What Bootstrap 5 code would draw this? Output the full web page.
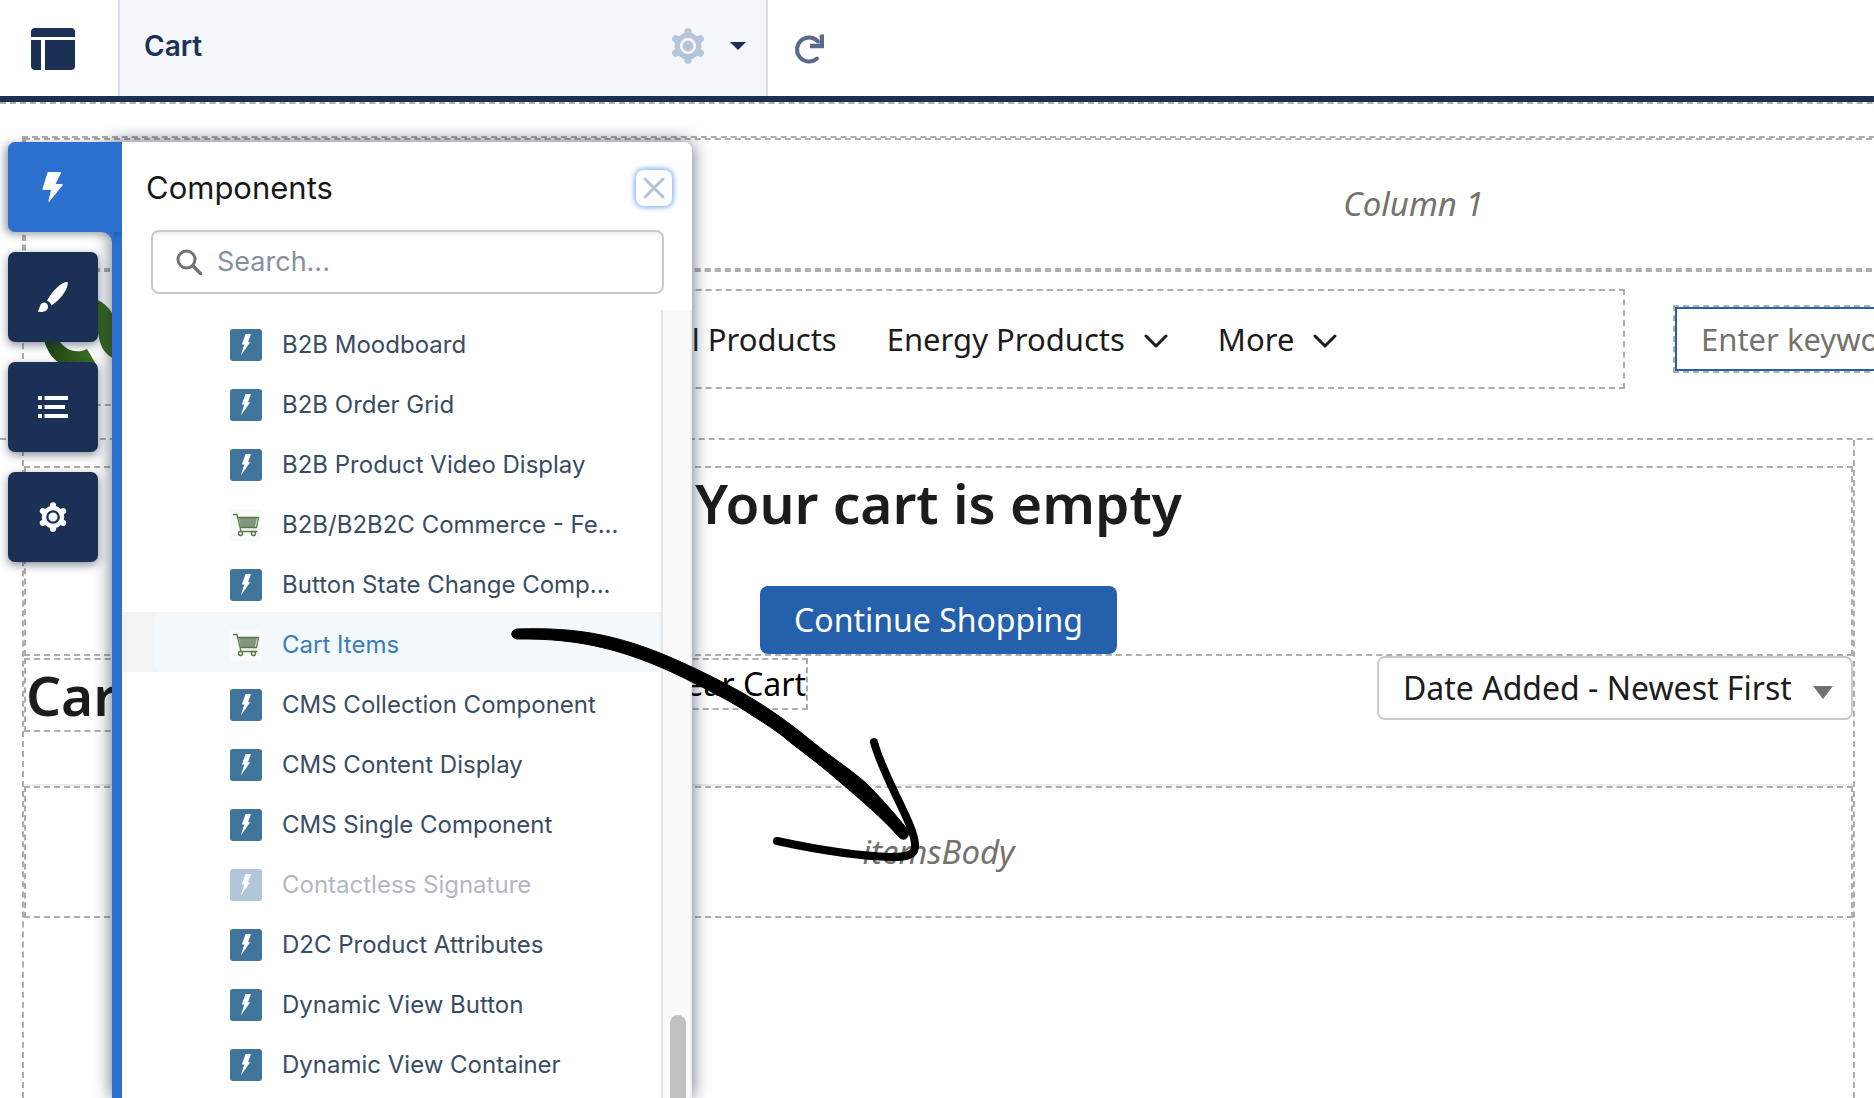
<!DOCTYPE html>
<html lang="en">
<head>
<meta charset="utf-8">
<meta name="viewport" content="width=device-width, initial-scale=1">
<title>Experience Builder - Cart</title>
<link href="https://cdn.jsdelivr.net/npm/bootstrap@5.3.0/dist/css/bootstrap.min.css" rel="stylesheet">
<style>
  :root { --navy: #1b3055; --blue: #2b70cd; --dash: 2px dashed #b0adab; --gutter: 22px; }
  body { font-family: "Inter", "Liberation Sans", sans-serif; color: #1c1c1c; background: #fff; }
  svg { display: block; flex: none; }

  /* top bar */
  .topbar { height: 102px; border-bottom: 6px solid var(--navy); }
  .brand-cell { width: 120px; border-right: 2px solid #dadfea; padding-left: 31px; padding-top: 2px; }
  .page-cell { width: 648px; background: #f4f6fb; border-right: 2px solid #d8dfe8; padding: 0 20px 4px 24px; }
  .page-name { font-size: 28px; font-weight: 600; color: var(--navy); }
  .plain-btn { border: 0; background: none; padding: 0; }

  /* canvas */
  .canvas { font-family: "Noto Sans", "Open Sans", sans-serif; font-size: 32px; line-height: 48px; overflow: hidden; }
  .site-head { width: 150%; border-top: var(--dash); border-bottom: var(--dash); padding: 32px 8px 0 var(--gutter); }
  .head-grid { border-top: var(--dash); border-left: var(--dash); }
  .zone { height: 132px; border: var(--dash); color: #75726d; font-style: italic; font-size: 33px; }
  .head-row { border-top: var(--dash); padding-bottom: 32px; }
  .logo-zone { width: 400px; height: 134px; border-bottom: var(--dash); padding: 24px 0 0 14px; }
  .nav-zone { width: 1100px; height: 100px; border: var(--dash); margin-left: 101px; padding-left: 137px; gap: 50px; font-size: 31px; }
  .nav-zone a { color: #1c1c1c; text-decoration: none; gap: 19px; white-space: nowrap; }
  .search-zone { width: 700px; margin-left: 48px; border: var(--dash); }
  .search-zone input { height: 64px; border: 2px solid #2560ac; border-radius: 0; font-size: 31px; padding: 0 24px; }
  .search-zone input::placeholder { color: #75726d; opacity: 1; }
  .site-body { margin: 0 19px 0 var(--gutter); border: var(--dash); border-top: 0; border-bottom: 0; padding-top: 26px; }
  .empty-zone { border: var(--dash); gap: 48px; }
  .big-title { font-size: 55px; line-height: 70px; font-weight: 600; margin: 0; }
  .shop-btn { height: 68px; padding: 0 34px; border: 0; border-radius: 8px; background: #2560ac; color: #fff; font-size: 32px; line-height: 48px; }
  .sum-row { height: 128px; }
  .cart-zone { width: 500px; height: 74px; border: var(--dash); margin-top: 2px; }
  .clear-zone { width: 284px; height: 52px; border: var(--dash); margin-top: 2px; }
  .clear-zone button { width: 100%; text-align: right; line-height: 48px; }
  .sort-box { width: 476px; }
  .sort-box select { height: 64px; border: 2px solid #c9c9c9; border-radius: 8px; font-size: 32px; line-height: 48px; padding: 0 60px 0 24px; background-image: none; color: #1c1c1c; }
  .sort-box svg { position: absolute; right: 20px; top: 30px; pointer-events: none; }
  .items-wrap { border-top: 2px solid #ecebea; }

  /* floating builder panel */
  .builder { position: absolute; left: 8px; top: 142px; bottom: 0; z-index: 5; }
  .tabs-col { width: 104px; gap: 20px; position: relative; z-index: 2; }
  .tab-btn { width: 90px; height: 90px; border: 0; border-radius: 7px; background: var(--navy); box-shadow: 0 3px 10px rgba(15,30,60,.5); display: flex; align-items: center; justify-content: center; padding: 0; }
  .tab-btn.current { width: 114px; background: var(--blue); padding-right: 24px; border-radius: 7px 0 0 7px; box-shadow: -3px 2px 9px rgba(15,30,60,.45); clip-path: inset(-20px 0 -20px -20px); }
  .joint { position: absolute; left: 94px; top: 90px; }
  .drawer-box { width: 580px; border-left: 10px solid var(--blue); border-radius: 0 8px 0 0; background: #fff; box-shadow: 0 0 18px rgba(10,30,55,.65); }
  .drawer-head { padding: 28px 20px 24px 24px; }
  .drawer-head h2 { font-size: 31px; line-height: 36px; font-weight: 400; margin: 0; color: #181818; }
  .close-btn { width: 36px; height: 36px; border: 0; border-radius: 8px; background: #fff; box-shadow: 0 0 5px 2px #8db8ee; padding: 7px; }
  .find-box { margin: 0 28px 0 29px; height: 64px; border: 2px solid #c9c9c9; border-radius: 8px; padding-left: 23px; gap: 15px; box-shadow: inset 0 3px 3px rgba(0,0,0,.06); }
  .find-box input { border: 0; outline: 0; background: none; font-size: 27px; flex: 1; min-width: 0; padding: 0; }
  .find-box input::placeholder { color: #8490a0; opacity: 1; }
  .list-area { margin-top: 16px; min-height: 0; }
  .comp-list { padding: 2px 0 0; margin: 0; list-style: none; overflow: hidden; }
  .comp-list li { height: 60px; padding-left: 32px; }
  .comp-list a { height: 60px; padding: 6px 0 0 76px; gap: 20px; color: #384c62; font-size: 24px; text-decoration: none; white-space: nowrap; display: flex; align-items: center; }
  .comp-list .picked { background: #f3f3f3; }
  .comp-list .picked a { background: #f2f8fc; color: #3a7db5; border-radius: 8px; }
  .comp-list .muted-item a { color: #b0b8c2; }
  .comp-list .muted-item svg { --bolt-fill: #b1c6d8; }
  .track { width: 31px; background: #fafafa; border-left: 2px solid #e7e7e7; border-right: 2px solid #efefef; padding: 705px 4px 0 7px; }
  .thumb { background: #c1c1c1; border-radius: 8px 8px 0 0; height: 100%; }
  .arrow-note { position: absolute; left: 500px; top: 610px; z-index: 9; pointer-events: none; }
</style>
</head>
<body>
<svg width="0" height="0" class="position-absolute" aria-hidden="true">
  <defs>
    <symbol id="bolt" viewBox="0 0 32 32"><rect width="32" height="32" rx="3" fill="var(--bolt-fill, #41749b)"/><path d="M15.600 5H21l-3 8.200h2.200L10.800 26.600l3.500-11H11.800z" fill="#fff"/></symbol>
    <symbol id="cart" viewBox="0 0 32 32"><rect width="32" height="32" fill="#fafafa"/><path d="M9 9h18l-2 9H10.500z" fill="#84957f"/><path d="M3 5.500h4l4 17h16.500M7.700 8.500H28.500L26.500 18.500H10.500" fill="none" stroke="#587a47" stroke-width="1.300"/><circle cx="10.500" cy="24.500" r="2" fill="#fff" stroke="#587a47" stroke-width="1.500"/><circle cx="23.500" cy="24.500" r="2" fill="#fff" stroke="#587a47" stroke-width="1.500"/></symbol>
    <symbol id="gear" viewBox="0 0 36 36"><circle cx="18" cy="18" r="13"/><path d="M18 4v28M5.900 11l24.200 14M30.100 11L5.900 25" stroke-width="7.500" stroke-linecap="round"/><circle cx="18" cy="18" r="6.800" stroke="var(--hole)" stroke-width="2.800"/></symbol>
  </defs>
</svg>

<div class="position-relative d-flex flex-column vh-100 overflow-hidden">
  <header class="topbar d-flex flex-shrink-0">
    <div class="brand-cell d-flex align-items-center">
      <svg width="44" height="42" fill="#1b3055" aria-label="Builder"><path d="M4 0h36a4 4 0 0 1 4 4v5H0V4a4 4 0 0 1 4-4zM0 12h10v30H4a4 4 0 0 1-4-4zM14 12h30v26a4 4 0 0 1-4 4H14z"/></svg>
    </div>
    <div class="page-cell d-flex align-items-center">
      <span class="page-name me-auto">Cart</span>
      <button class="plain-btn d-flex align-items-center" aria-label="Page settings">
        <svg width="36" height="36" fill="#b5c5da" stroke="#b5c5da" style="--hole:#f4f6fb"><use href="#gear"/></svg>
        <svg class="ms-4" width="16" height="8" fill="#1b3055"><path d="M0 0h16L8 8z"/></svg>
      </button>
    </div>
    <button class="plain-btn ms-4" aria-label="Refresh">
      <svg width="32" height="32" fill="none" stroke="#58698c" stroke-width="4"><path d="M26 9.500A12 12 0 1 0 25 26.500" stroke-linecap="round"/><path d="M30 2.500V14H18" stroke-width="4.500"/></svg>
    </button>
  </header>

  <main class="canvas flex-fill d-flex flex-column">
    <div class="site-head">
      <div class="head-grid">
        <div class="zone d-flex align-items-center justify-content-center">Column 1</div>
        <div class="head-row d-flex align-items-center">
          <div class="logo-zone">
            <svg width="80" height="72" fill="#3a6b22" aria-label="Store logo"><defs><linearGradient id="leaf"><stop offset="0" stop-color="#1f4012"/><stop offset="1" stop-color="#3f7524"/></linearGradient></defs><path fill="url(#leaf)" d="M4 30c1 20 10 40 30 40h25l-10-17c-12 6-26 0-31-15z"/><path d="M57 3c9 3 16 10 20 20v40c-12-5-15-14-17-26-1-12-3-16-8-22z"/></svg>
          </div>
          <nav class="nav-zone d-flex align-items-center" aria-label="Products">
            <a href="#">All Products</a>
            <a href="#" class="d-flex align-items-center">Energy Products <svg class="mt-1" width="24" height="16" fill="none" stroke="#1c1c1c" stroke-width="3" stroke-linecap="round" stroke-linejoin="round"><path d="M2 3l10 10L22 3"/></svg></a>
            <a href="#" class="d-flex align-items-center">More <svg class="mt-1" width="24" height="16" fill="none" stroke="#1c1c1c" stroke-width="3" stroke-linecap="round" stroke-linejoin="round"><path d="M2 3l10 10L22 3"/></svg></a>
          </nav>
          <div class="search-zone"><input class="form-control" type="search" placeholder="Enter keyword or SKU" aria-label="Search products"></div>
        </div>
      </div>
    </div>

    <div class="site-body flex-fill">
      <section class="empty-zone d-flex flex-column align-items-center">
        <h1 class="big-title">Your cart is empty</h1>
        <button class="shop-btn">Continue Shopping</button>
      </section>
      <div class="sum-row d-flex align-items-start">
        <div class="cart-zone"><h2 class="big-title">Cart</h2></div>
        <div class="clear-zone"><button class="plain-btn">Clear Cart</button></div>
        <div class="sort-box position-relative ms-auto">
          <select class="form-select" aria-label="Sort by"><option>Date Added - Newest First</option></select>
          <svg width="20" height="13" fill="#75716d"><path d="M0 0h20L10 13z"/></svg>
        </div>
      </div>
      <div class="items-wrap"><div class="zone d-flex align-items-center justify-content-center">itemsBody</div></div>
    </div>
  </main>

  <aside class="builder d-flex">
    <div class="tabs-col d-flex flex-column">
      <button class="tab-btn current" aria-label="Components"><svg width="22" height="30" fill="#fff"><path d="M6.500 0H18a1 1 0 0 1 .8 1.500L13.500 12H20a.8.8 0 0 1 .6 1.300L7.500 29.500a.6.6 0 0 1-1.100-.5L9 18H1.500A1 1 0 0 1 .6 16.600L5.500.8A1 1 0 0 1 6.500 0z"/></svg></button>
      <svg class="joint" width="12" height="14" fill="#2b70cd"><path d="M0 0h12v14h-2V10A10 10 0 0 0 0 0z"/></svg>
      <button class="tab-btn" aria-label="Theme"><svg width="32" height="32" fill="#fff"><path d="M29.500 1c1 0 1.500.6 1.300 1.800C30 10 23 19 14.500 24.500c-1-2.500-2.200-3.700-4.500-4.700C15 10 24 1.500 29.500 1zM7.300 21.500c2.500.3 4.200 2.500 3.700 5C10 31 5 31.200 1.500 30.800c-.8-.2-.8-.9-.2-1.400C3 27.500 2.500 21.500 7.300 21.500z"/></svg></button>
      <button class="tab-btn" aria-label="Page structure"><svg width="30" height="22" fill="#fff"><path d="M0 0h4v4H0zM0 9h4v4H0zM0 18h4v4H0zM6.500 0H30v4H6.500zM6.500 9H27v4H6.500zM6.500 18H30v4H6.500z"/></svg></button>
      <button class="tab-btn" aria-label="Settings"><svg width="30" height="30" fill="#fff" stroke="#fff" style="--hole:#1b3055"><use href="#gear"/></svg></button>
    </div>
    <div class="drawer-box d-flex flex-column">
      <div class="drawer-head d-flex align-items-center justify-content-between">
        <h2>Components</h2>
        <button class="close-btn" aria-label="Close"><svg width="22" height="22" fill="none" stroke="#b3c3d9" stroke-width="3" stroke-linecap="round"><path d="M2 2l18 18M20 2L2 20"/></svg></button>
      </div>
      <label class="find-box d-flex align-items-center">
        <svg width="26" height="26" fill="none" stroke="#757371" stroke-width="3"><circle cx="10.500" cy="10.500" r="8.500"/><path d="M17 17l7.500 7.500" stroke-linecap="round" stroke-width="3.500"/></svg>
        <input type="text" placeholder="Search..." aria-label="Search components">
      </label>
      <div class="list-area d-flex flex-fill">
        <ul class="comp-list flex-fill">
          <li><a href="#"><svg width="32" height="32"><use href="#bolt"/></svg>B2B Moodboard</a></li>
          <li><a href="#"><svg width="32" height="32"><use href="#bolt"/></svg>B2B Order Grid</a></li>
          <li><a href="#"><svg width="32" height="32"><use href="#bolt"/></svg>B2B Product Video Display</a></li>
          <li><a href="#"><svg width="32" height="32"><use href="#cart"/></svg>B2B/B2B2C Commerce - Fe...</a></li>
          <li><a href="#"><svg width="32" height="32"><use href="#bolt"/></svg>Button State Change Comp...</a></li>
          <li class="picked"><a href="#"><svg width="32" height="32"><use href="#cart"/></svg>Cart Items</a></li>
          <li><a href="#"><svg width="32" height="32"><use href="#bolt"/></svg>CMS Collection Component</a></li>
          <li><a href="#"><svg width="32" height="32"><use href="#bolt"/></svg>CMS Content Display</a></li>
          <li><a href="#"><svg width="32" height="32"><use href="#bolt"/></svg>CMS Single Component</a></li>
          <li class="muted-item"><a href="#"><svg width="32" height="32"><use href="#bolt"/></svg>Contactless Signature</a></li>
          <li><a href="#"><svg width="32" height="32"><use href="#bolt"/></svg>D2C Product Attributes</a></li>
          <li><a href="#"><svg width="32" height="32"><use href="#bolt"/></svg>Dynamic View Button</a></li>
          <li><a href="#"><svg width="32" height="32"><use href="#bolt"/></svg>Dynamic View Container</a></li>
        </ul>
        <div class="track"><div class="thumb"></div></div>
      </div>
    </div>
  </aside>

  <svg class="arrow-note" width="440" height="260" viewBox="500 610 440 260" aria-hidden="true">
    <path d="M517 629C580 627 625 635 694 668C715 678 735 688 753 699C776 713 796 728 814 743C834 759 850 769 866 783C882 799 896 815 907 829C911 836 905 843 899 837C882 818 862 801 841 783C824 768 808 756 791 743C780 733 766 724 753 716C734 703 714 693 694 683C630 650 580 638 517 639C510 638 510 630 517 629Z" stroke="#000" stroke-width="1"/>
    <path d="M874 742C884 780 917 828 915 847C914 856 905 857 892 857C850 856 805 847 777 841" fill="none" stroke="#000" stroke-width="8" stroke-linecap="round"/>
  </svg>
</div>
<script src="https://cdn.jsdelivr.net/npm/bootstrap@5.3.0/dist/js/bootstrap.bundle.min.js"></script>
</body>
</html>
